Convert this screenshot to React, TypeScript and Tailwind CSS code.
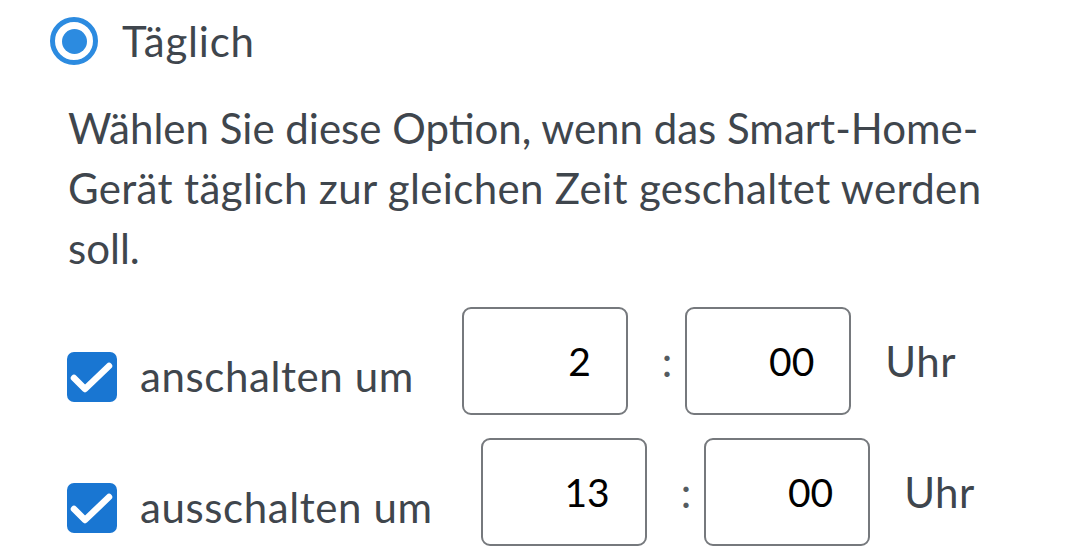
import React from "react";

function CheckBox() {
  return (
    <div className="w-[50px] h-[50px] rounded-[7px] bg-[#1976d2] flex items-center justify-center shrink-0">
      <svg width="50" height="50" viewBox="0 0 50 50">
        <path d="M7 26 L18 37 L42 14" fill="none" stroke="white" strokeWidth="6.5" strokeLinecap="round" strokeLinejoin="round" />
      </svg>
    </div>
  );
}

function TimeBox({ value }: { value: string }) {
  return (
    <div className="w-[166px] h-[108px] border-2 border-[#76797d] rounded-[9px] flex items-center justify-end pr-[35px] text-[39px] text-black leading-none">
      {value}
    </div>
  );
}

function Row({ label, h, m, className }: { label: string; h: string; m: string; className?: string }) {
  return (
    <div className={"flex items-start " + (className ?? "")}>
      <div className="flex items-center mt-[44px] gap-[23px]">
        <CheckBox />
        <span className="text-[42px] leading-[1.2] tracking-[0.6px] whitespace-nowrap">{label}</span>
      </div>
      <div className="flex items-center h-[108px] ml-[48px]">
        <TimeBox value={h} />
        <span className="text-[42px] leading-[1.2] ml-[34px] mr-[13px] text-[#555b60]">:</span>
        <TimeBox value={m} />
        <span className="text-[42px] leading-[1.2] tracking-[0.5px] ml-[34px]">Uhr</span>
      </div>
    </div>
  );
}

export default function App() {
  return (
    <div
      className="w-[1080px] h-[554px] bg-white overflow-hidden text-[#3f464d] pl-[50px] pt-[16px]"
      style={{ fontFamily: "Lato, 'Noto Sans', sans-serif" }}
    >
      <div className="flex items-center gap-[24px]">
        <div className="w-[48px] h-[48px] rounded-full border-[5px] border-[#2c8be0] flex items-center justify-center shrink-0">
          <div className="w-[25px] h-[25px] rounded-full bg-[#2c8be0]" />
        </div>
        <span className="text-[42px] leading-[1.2] tracking-[0.8px]">Täglich</span>
      </div>
      <p className="ml-[18px] mt-[32px] text-[42px] leading-[60px] whitespace-nowrap">
        Wählen Sie diese Option, wenn das Smart-Home-
        <br />
        <span className="tracking-[0.35px]">Gerät täglich zur gleichen Zeit geschaltet werden</span>
        <br />
        soll.
      </p>
      <div className="ml-[17px]">
        <Row label="anschalten um" h="2" m="00" className="mt-[29px]" />
        <Row label="ausschalten um" h="13" m="00" className="mt-[23px]" />
      </div>
    </div>
  );
}
